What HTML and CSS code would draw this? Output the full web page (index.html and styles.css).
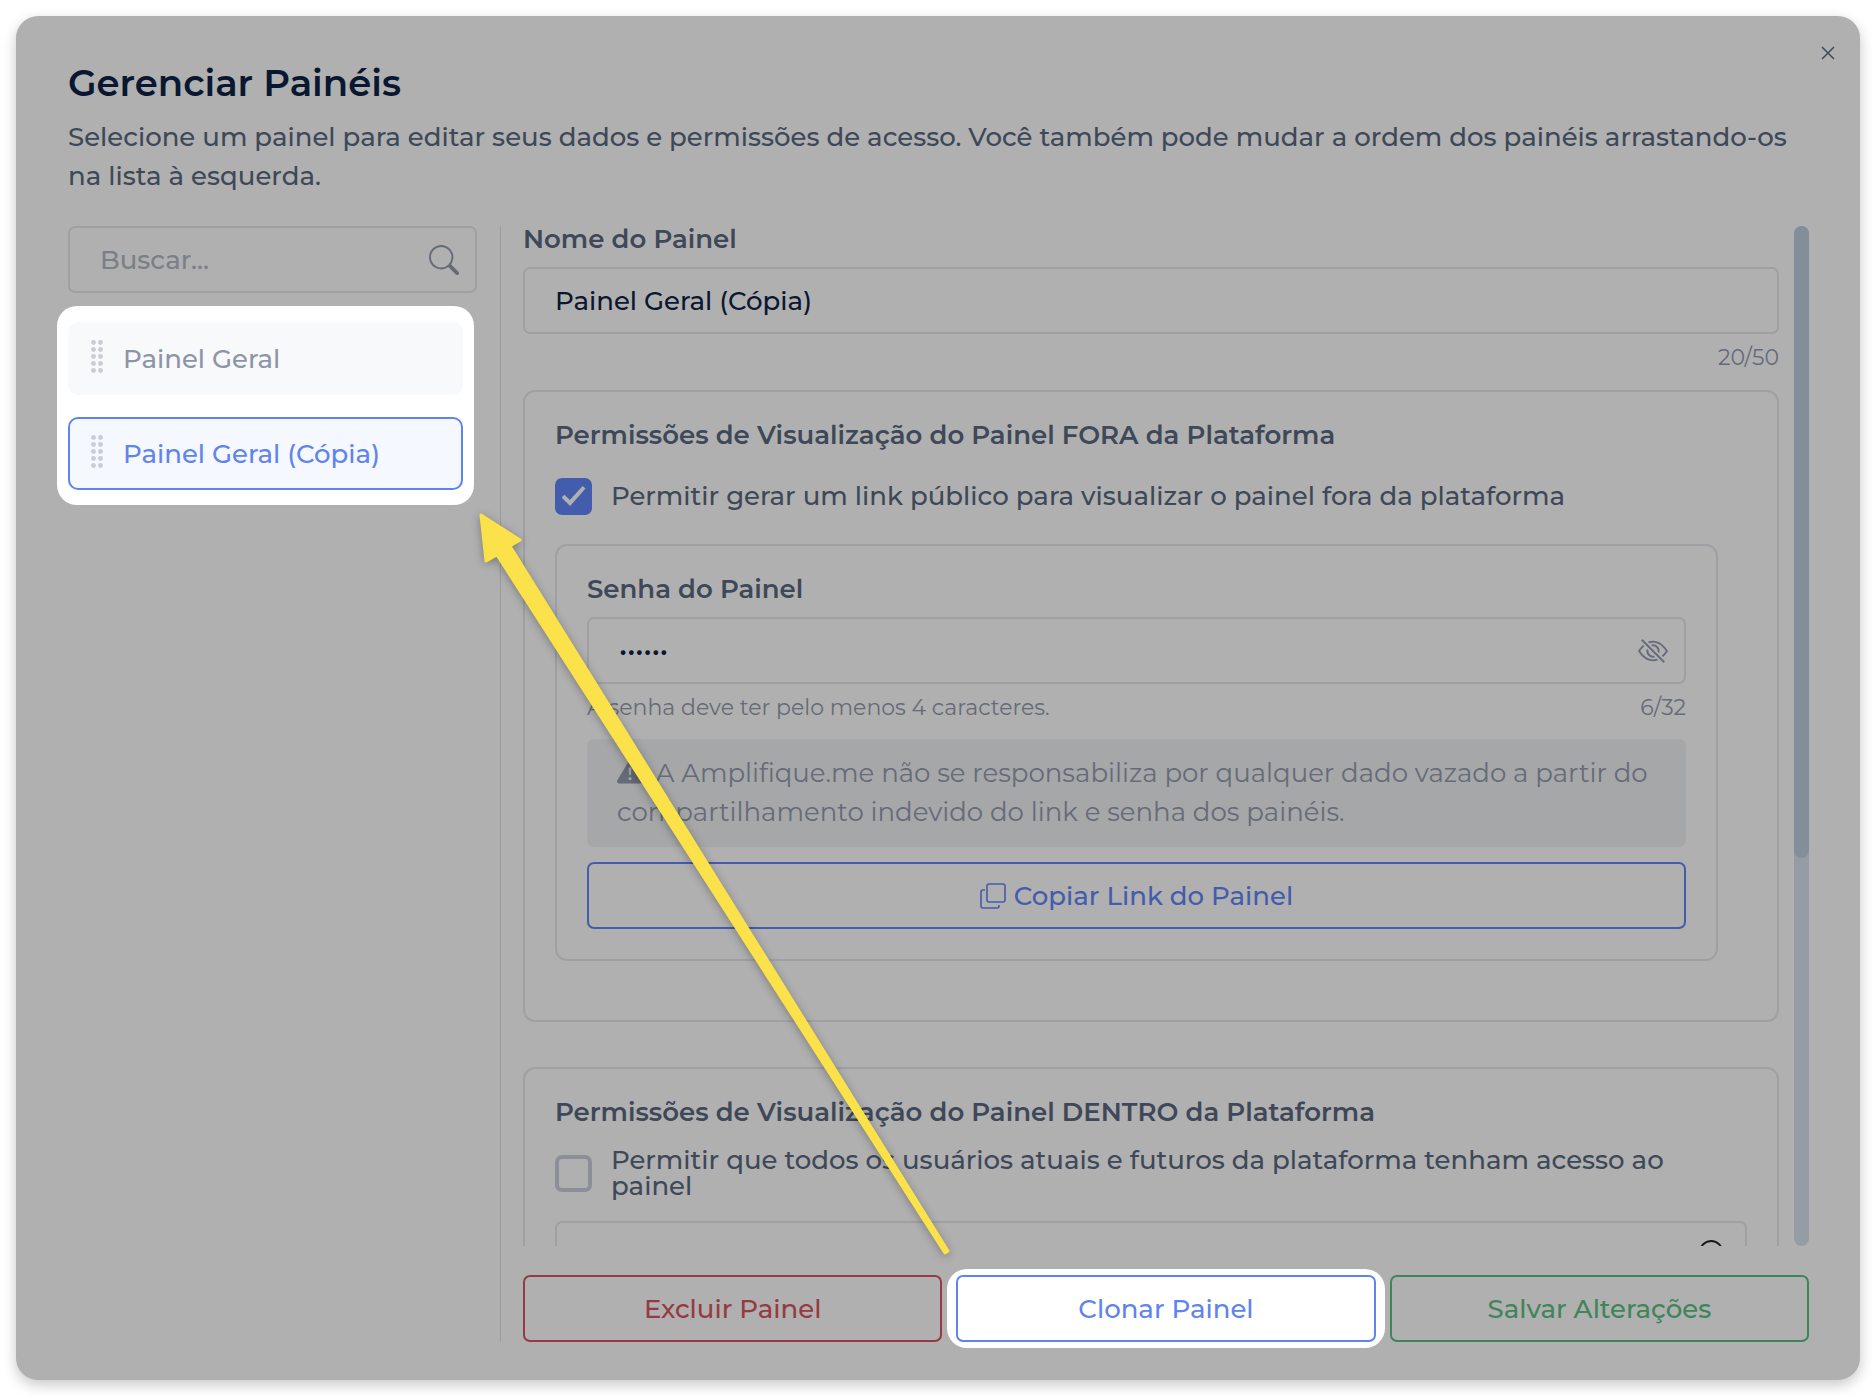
FILE: index.html
```html
<!DOCTYPE html>
<html lang="pt-BR">
<head>
    <meta charset="UTF-8">
    <meta name="viewport" content="width=device-width, initial-scale=1.0">
    <title>Gerenciar Painéis</title>
    <link rel="stylesheet" href="styles.css">
</head>
<body>
    <svg class="sprite" aria-hidden="true">
        <symbol id="icon-search" viewBox="0 0 16 16">
            <path d="M11.742 10.344a6.5 6.5 0 1 0-1.397 1.398h-.001q.044.06.098.115l3.85 3.85a1 1 0 0 0 1.415-1.414l-3.85-3.85a1 1 0 0 0-.115-.1zM12 6.5a5.5 5.5 0 1 1-11 0 5.5 5.5 0 0 1 11 0"/>
        </symbol>
        <symbol id="icon-grip" viewBox="0 0 12 33">
            <circle cx="2.5" cy="2.5" r="2.4"/><circle cx="9.5" cy="2.5" r="2.4"/>
            <circle cx="2.5" cy="9.5" r="2.4"/><circle cx="9.5" cy="9.5" r="2.4"/>
            <circle cx="2.5" cy="16.5" r="2.4"/><circle cx="9.5" cy="16.5" r="2.4"/>
            <circle cx="2.5" cy="23.5" r="2.4"/><circle cx="9.5" cy="23.5" r="2.4"/>
            <circle cx="2.5" cy="30.5" r="2.4"/><circle cx="9.5" cy="30.5" r="2.4"/>
        </symbol>
    </svg>

    <div class="modal" role="dialog" aria-labelledby="modal-title">
        <button class="modal-close" type="button" aria-label="Fechar">
            <svg viewBox="0 0 14 14" width="14" height="14"><path d="M1 1l12 12M13 1L1 13" fill="none" stroke="currentColor" stroke-width="1.5"/></svg>
        </button>

        <header class="modal-header">
            <h1 id="modal-title">Gerenciar Painéis</h1>
            <p>Selecione um painel para editar seus dados e permissões de acesso. Você também pode mudar a ordem dos painéis arrastando-os na lista à esquerda.</p>
        </header>

        <div class="modal-body">
            <!-- Panel list -->
            <aside class="sidebar">
                <div class="field">
                    <input type="search" placeholder="Buscar..." aria-label="Buscar painel">
                    <svg class="icon"><use href="#icon-search"/></svg>
                </div>
                <div class="panel-list">
                    <button class="panel-item" type="button">
                        <svg class="grip"><use href="#icon-grip"/></svg>
                        Painel Geral
                    </button>
                    <button class="panel-item active" type="button">
                        <svg class="grip"><use href="#icon-grip"/></svg>
                        Painel Geral (Cópia)
                    </button>
                </div>
            </aside>

            <!-- Panel form -->
            <main class="editor">
                <div class="scroll-area">
                    <form class="panel-form">
                        <label class="heading" for="panel-name">Nome do Painel</label>
                        <div class="field">
                            <input type="text" id="panel-name" value="Painel Geral (Cópia)" maxlength="50">
                        </div>
                        <div class="hint"><span></span><span>20/50</span></div>

                        <section class="card card-outside">
                            <h2 class="heading">Permissões de Visualização do Painel FORA da Plataforma</h2>
                            <div class="check-row">
                                <input type="checkbox" id="public-link" checked>
                                <label for="public-link">Permitir gerar um link público para visualizar o painel fora da plataforma</label>
                            </div>

                            <div class="card card-inner">
                                <label class="heading" for="panel-password">Senha do Painel</label>
                                <div class="field">
                                    <input type="password" id="panel-password" value="senha1" maxlength="32">
                                    <svg class="icon" viewBox="0 0 16 16">
                                        <path d="M13.359 11.238C15.06 9.72 16 8 16 8s-3-5.5-8-5.5a7 7 0 0 0-2.79.588l.77.771A6 6 0 0 1 8 3.5c2.12 0 3.879 1.168 5.168 2.457A13 13 0 0 1 14.828 8q-.086.13-.195.288c-.335.48-.83 1.12-1.465 1.755q-.247.248-.517.486z"/>
                                        <path d="M11.297 9.176a3.5 3.5 0 0 0-4.474-4.474l.823.823a2.5 2.5 0 0 1 2.829 2.829zm-2.943 1.299.822.822a3.5 3.5 0 0 1-4.474-4.474l.823.823a2.5 2.5 0 0 0 2.829 2.829"/>
                                        <path d="M3.35 5.47q-.27.24-.518.487A13 13 0 0 0 1.172 8l.195.288c.335.48.83 1.12 1.465 1.755C4.121 11.332 5.881 12.5 8 12.5c.716 0 1.39-.133 2.02-.36l.77.772A7 7 0 0 1 8 13.5C3 13.5 0 8 0 8s.939-1.721 2.641-3.238l.708.709zm10.296 8.884-12-12 .708-.708 12 12z"/>
                                    </svg>
                                </div>
                                <div class="hint"><span>A senha deve ter pelo menos 4 caracteres.</span><span>6/32</span></div>

                                <p class="alert">
                                    <svg class="alert-icon" viewBox="0 0 16 16"><path d="M8.982 1.566a1.13 1.13 0 0 0-1.96 0L.165 13.233c-.457.778.091 1.767.98 1.767h13.713c.889 0 1.438-.99.98-1.767zM8 5c.535 0 .954.462.9.995l-.35 3.507a.552.552 0 0 1-1.1 0L7.1 5.995A.905.905 0 0 1 8 5m.002 6a1 1 0 1 1 0 2 1 1 0 0 1 0-2"/></svg>
                                    A Amplifique.me não se responsabiliza por qualquer dado vazado a partir do compartilhamento indevido do link e senha dos painéis.
                                </p>

                                <button class="btn btn-copy" type="button">
                                    <svg viewBox="0 0 26 26" width="26" height="26" fill="none" stroke="currentColor" stroke-width="1.6">
                                        <rect x="7" y="1" width="18" height="18" rx="2"/>
                                        <path d="M5 7H3a2 2 0 0 0-2 2v14a2 2 0 0 0 2 2h14a2 2 0 0 0 2-2v-1"/>
                                    </svg>
                                    Copiar Link do Painel
                                </button>
                            </div>
                        </section>

                        <section class="card">
                            <h2 class="heading">Permissões de Visualização do Painel DENTRO da Plataforma</h2>
                            <div class="check-row">
                                <input type="checkbox" id="all-users">
                                <label for="all-users">Permitir que todos os usuários atuais e futuros da plataforma tenham acesso ao painel</label>
                            </div>
                            <div class="field field-users">
                                <input type="search" placeholder="Buscar..." aria-label="Buscar usuário">
                                <svg class="icon"><use href="#icon-search"/></svg>
                            </div>
                        </section>
                    </form>
                    <div class="scrollbar"><div class="scrollbar-thumb"></div></div>
                </div>

                <footer class="actions">
                    <button class="btn btn-danger" type="button">Excluir Painel</button>
                    <button class="btn btn-clone" type="button">Clonar Painel</button>
                    <button class="btn btn-success" type="button">Salvar Alterações</button>
                </footer>
            </main>
        </div>

        <!-- Arrow from the clone button to the cloned panel -->
        <svg class="arrow" viewBox="0 0 480 750" width="480" height="750" aria-hidden="true">
            <path d="M2 3L41 28L31 34L469 739L466 741L18 43L7 49Z"/>
        </svg>
    </div>
</body>
</html>
```
FILE: styles.css
```css
* {
    box-sizing: border-box;
}

body {
    margin: 0;
    padding: 16px;
    background: #fff;
    color: #3e4858;
    font-family: Montserrat, Inter, sans-serif;
    font-size: 26px;
    font-weight: 500;
    line-height: 26px;
}

h1, h2, p {
    margin: 0;
}

input, button {
    font: inherit;
    color: inherit;
}

button {
    cursor: pointer;
}

.sprite {
    position: absolute;
    width: 0;
    height: 0;
}

.modal {
    position: relative;
    display: flex;
    flex-direction: column;
    height: calc(100vh - 32px);
    padding: 44px 51px 38px 52px;
    background: #b0b0b0;
    border-radius: 22px;
    box-shadow: 0 5px 14px rgba(0, 0, 0, 0.22);
}

.modal-close {
    position: absolute;
    top: 22px;
    right: 17px;
    display: flex;
    padding: 8px;
    border: none;
    background: none;
}

.modal-header {
    margin-bottom: 30px;
}

.modal-header h1 {
    margin-bottom: 12px;
    color: #0a1731;
    font-size: 37px;
    font-weight: 600;
    line-height: 46px;
}

.modal-header p {
    line-height: 39px;
}

.modal-body {
    display: flex;
    flex: 1;
    min-height: 0;
}

/* Sidebar */
.sidebar {
    width: 433px;
    padding-right: 23px;
    border-right: 1px solid #9a9b9f;
}

.field {
    display: flex;
    align-items: center;
    height: 67px;
    padding: 0 16px 0 30px;
    border: 2px solid #9fa0a4;
    border-radius: 7px;
}

.field input {
    flex: 1;
    min-width: 0;
    padding: 0;
    border: none;
    outline: none;
    background: none;
    color: #0a1731;
}

.field input::placeholder {
    color: #7b7f88;
    opacity: 1;
}

.icon {
    width: 30px;
    height: 30px;
    fill: #666b78;
}

.panel-list {
    display: flex;
    flex-direction: column;
    gap: 22px;
    width: 417px;
    margin: 13px 0 0 -11px;
    padding: 16px 11px 15px;
    background: #fff;
    border-radius: 20px;
}

.panel-item {
    display: flex;
    align-items: center;
    gap: 20px;
    height: 73px;
    padding: 0 21px;
    border: 2px solid #f8f9fb;
    border-radius: 10px;
    background: #f8f9fb;
    color: #8c95a6;
}

.panel-item.active {
    border-color: #5f84ee;
    background: #f5f8ff;
    color: #5f84ee;
}

.grip {
    width: 12px;
    height: 33px;
    margin-bottom: 4px;
    fill: #c9ccd4;
}

/* Editor */
.editor {
    display: flex;
    flex: 1;
    flex-direction: column;
    gap: 29px;
    min-width: 0;
    padding-left: 22px;
}

.scroll-area {
    display: flex;
    flex: 1;
    gap: 15px;
    min-height: 0;
}

.panel-form {
    flex: 1;
    min-width: 0;
    margin-top: -8px;
    padding-top: 8px;
    overflow-y: auto;
    scrollbar-width: none;
}

.scrollbar {
    width: 15px;
    border-radius: 8px;
    background: #959ca5;
}

.scrollbar-thumb {
    height: 62%;
    border-radius: 8px;
    background: #848e9b;
}

.heading {
    display: block;
    font-size: 26px;
    font-weight: 600;
    line-height: 26px;
}

label.heading {
    margin-bottom: 15px;
}

.hint {
    display: flex;
    justify-content: space-between;
    margin-top: 11px;
    color: #666b78;
    font-size: 22px;
    font-weight: 400;
}

.card {
    margin-top: 45px;
    padding: 30px;
    border: 2px solid #9fa0a4;
    border-radius: 12px;
}

.card-outside {
    margin-top: 19px;
    padding-bottom: 59px;
}

.card-inner {
    margin: 0 29px 0 0;
}

.check-row {
    display: flex;
    align-items: center;
    gap: 19px;
    min-height: 52px;
    margin: 22px 0;
}

.check-row input {
    appearance: none;
    flex: none;
    width: 37px;
    height: 37px;
    margin: 0;
    border: 4px solid #8c8f97;
    border-radius: 7px;
}

.check-row input:checked {
    display: grid;
    place-items: center;
    border-color: #445cac;
    background: #445cac;
}

.check-row input:checked::before {
    content: "";
    width: 24px;
    height: 20px;
    background: #b0b0b0;
    clip-path: polygon(0 58%, 12% 44%, 35% 70%, 88% 0, 100% 12%, 36% 100%);
}

.alert {
    margin: 18px 0 15px;
    padding: 15px 30px;
    border-radius: 7px;
    background: #a5a7a9;
    color: #666b78;
    font-weight: 400;
    line-height: 39px;
}

.alert-icon {
    width: 26px;
    height: 26px;
    margin-right: 6px;
    fill: #666b78;
    vertical-align: -3px;
}

.btn {
    display: flex;
    align-items: center;
    justify-content: center;
    gap: 8px;
    height: 67px;
    border: 2px solid currentColor;
    border-radius: 7px;
    background: none;
}

.btn-copy {
    width: 100%;
    color: #445cac;
}

.actions {
    display: grid;
    grid-template-columns: repeat(3, 1fr);
    gap: 14px;
    isolation: isolate;
}

.btn-danger {
    color: #963a42;
}

.btn-success {
    color: #3f8559;
}

.btn-clone {
    position: relative;
    color: #5f84ee;
}

/* White halo around the highlighted button */
.btn-clone::before {
    content: "";
    position: absolute;
    z-index: -1;
    inset: -8px -11px;
    border-radius: 20px;
    background: #fff;
}

.field-users .icon {
    fill: #16181d;
}

.arrow {
    position: absolute;
    top: 496px;
    left: 463px;
    fill: #fbe14a;
    stroke: #fbe14a;
    stroke-width: 3px;
    stroke-linejoin: round;
    filter: drop-shadow(0 2px 4px rgba(0, 0, 0, 0.3));
    pointer-events: none;
}
```
